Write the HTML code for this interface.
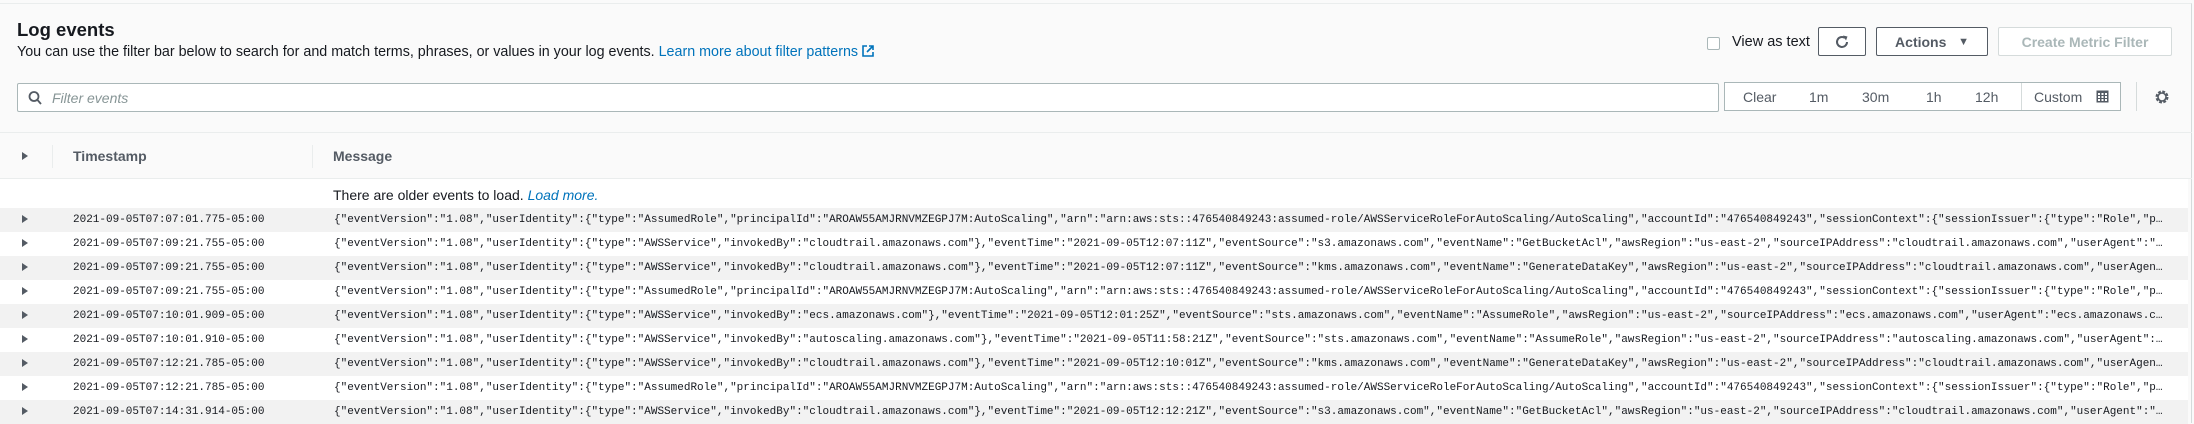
<!DOCTYPE html>
<html><head><meta charset="utf-8"><style>
*{box-sizing:border-box;margin:0;padding:0}
body{width:2194px;height:413px;overflow:hidden;background:#fafafa;font-family:"Liberation Sans",sans-serif;color:#16191f;position:relative}
.abs{position:absolute}
.panel{position:absolute;left:0;top:3px;width:2192px;height:420px;border-top:1px solid #eaeded;border-right:1px solid #d5dbdb;background:#fafafa}
.btn{position:absolute;border:1px solid #545b64;border-radius:2px;background:#fff;font-weight:bold;font-size:14px;color:#545b64;display:flex;align-items:center;justify-content:center}
.row{position:absolute;left:0;width:2188px;height:24px;font-family:"Liberation Mono",monospace;font-size:11px;color:#16191f;line-height:24px;white-space:nowrap}
.row .c{position:absolute;left:22px;top:7px;width:0;height:0;border-left:6px solid #545b64;border-top:4px solid transparent;border-bottom:4px solid transparent}
.row .t{position:absolute;left:73px}
.row .m{position:absolute;left:334px;width:1834px;overflow:hidden;text-overflow:ellipsis}
.g{background:#f2f2f2}.w{background:#fff}
.tb{position:absolute;top:0;height:100%;display:flex;align-items:center;font-size:14px;color:#545b64}
</style></head><body>
<div class="panel"></div>
<div class="abs" style="left:17px;top:19px;font-size:18.5px;font-weight:bold">Log events</div>
<div class="abs" style="left:17px;top:44px;font-size:14.3px;color:#16191f">You can use the filter bar below to search for and match terms, phrases, or values in your log events. <span style="color:#0073bb">Learn more about filter patterns</span> <svg width="12" height="12" viewBox="0 0 12 12" style="vertical-align:-1px"><path d="M5 1H1v10h10V7M7 1h4v4M11 1L5 7" stroke="#0073bb" stroke-width="1.6" fill="none"/></svg></div>

<div class="abs" style="left:1707px;top:37px;width:13px;height:13px;border:1px solid #aab7b8;border-radius:2px;background:#fff"></div>
<div class="abs" style="left:1732px;top:34px;font-size:14.5px;color:#16191f">View as text</div>
<div class="btn" style="left:1818px;top:27px;width:48px;height:29px"><svg width="16" height="16" viewBox="0 0 16 16"><path d="M13 8A5 5 0 1 1 11 4" stroke="#545b64" stroke-width="2" fill="none"/><path d="M9 1.5L13.5 2.5 12 6.5Z" fill="#545b64"/></svg></div>
<div class="btn" style="left:1876px;top:27px;width:112px;height:29px">Actions&nbsp;&nbsp;&nbsp;<span style="font-size:11px">▼</span></div>
<div class="btn" style="left:1998px;top:27px;width:174px;height:29px;border-color:#d5dbdb;color:#aab7b8">Create Metric Filter</div>

<div class="abs" style="left:17px;top:83px;width:1702px;height:29px;border:1px solid #aab7b8;border-radius:2px;background:#fff">
<svg class="abs" style="left:10px;top:6px" width="15" height="16" viewBox="0 0 15 16"><circle cx="6" cy="6.5" r="4.5" stroke="#545b64" stroke-width="1.8" fill="none"/><path d="M9.5 10l3.5 4" stroke="#545b64" stroke-width="1.8"/></svg>
<div class="abs" style="left:34px;top:6px;font-size:14px;font-style:italic;color:#879596">Filter events</div>
</div>
<div class="abs" style="left:1724px;top:82px;width:397px;height:29px;border:1px solid #aab7b8;background:#fff">
<div class="tb" style="left:18px">Clear</div>
<div class="tb" style="left:84px">1m</div>
<div class="tb" style="left:137px">30m</div>
<div class="tb" style="left:201px">1h</div>
<div class="tb" style="left:250px">12h</div>
<div class="abs" style="left:296px;top:0;width:1px;height:27px;background:#d5dbdb"></div>
<div class="tb" style="left:309px">Custom</div>
<svg class="abs" style="left:371px;top:7px" width="13" height="13" viewBox="0 0 13 13"><rect x="0.5" y="0.5" width="12" height="12" fill="#545b64"/><g fill="#fff"><rect x="2" y="3" width="2" height="2"/><rect x="5.5" y="3" width="2" height="2"/><rect x="9" y="3" width="2" height="2"/><rect x="2" y="6" width="2" height="2"/><rect x="5.5" y="6" width="2" height="2"/><rect x="9" y="6" width="2" height="2"/><rect x="2" y="9" width="2" height="2"/><rect x="5.5" y="9" width="2" height="2"/><rect x="9" y="9" width="2" height="2"/></g></svg>
</div>
<div class="abs" style="left:2136px;top:82px;width:1px;height:29px;background:#d5dbdb"></div>
<svg class="abs" style="left:2154px;top:89px" width="16" height="16" viewBox="0 0 16 16"><circle cx="8" cy="8" r="5.2" stroke="#545b64" stroke-width="2.6" fill="none" stroke-dasharray="2.7 1.4"/><circle cx="8" cy="8" r="4" stroke="#545b64" stroke-width="1.6" fill="none"/></svg>

<div class="abs" style="left:0;top:132px;width:2192px;height:1px;background:#eaeded"></div>
<div class="abs" style="left:0;top:178px;width:2192px;height:1px;background:#eaeded"></div>
<div class="abs" style="left:22px;top:152px;width:0;height:0;border-left:6px solid #545b64;border-top:4px solid transparent;border-bottom:4px solid transparent"></div>
<div class="abs" style="left:52px;top:145px;width:1px;height:23px;background:#eaeded"></div>
<div class="abs" style="left:73px;top:148px;font-size:14px;font-weight:bold;color:#545b64">Timestamp</div>
<div class="abs" style="left:312px;top:145px;width:1px;height:23px;background:#eaeded"></div>
<div class="abs" style="left:333px;top:148px;font-size:14px;font-weight:bold;color:#545b64">Message</div>
<div class="abs w" style="left:0;top:179px;width:2188px;height:29px"></div>
<div class="abs" style="left:333px;top:187px;font-size:14px;color:#16191f">There are older events to load. <i style="color:#0073bb">Load more.</i></div>

<div class="row g" style="top:208px"><div class="c"></div><span class="t">2021-09-05T07:07:01.775-05:00</span><span class="m">{"eventVersion":"1.08","userIdentity":{"type":"AssumedRole","principalId":"AROAW55AMJRNVMZEGPJ7M:AutoScaling","arn":"arn:aws:sts::476540849243:assumed-role/AWSServiceRoleForAutoScaling/AutoScaling","accountId":"476540849243","sessionContext":{"sessionIssuer":{"type":"Role","principalId":"AROAW55AMJRNVMZEGPJ7M"}}}}</span></div>
<div class="row w" style="top:232px"><div class="c"></div><span class="t">2021-09-05T07:09:21.755-05:00</span><span class="m">{"eventVersion":"1.08","userIdentity":{"type":"AWSService","invokedBy":"cloudtrail.amazonaws.com"},"eventTime":"2021-09-05T12:07:11Z","eventSource":"s3.amazonaws.com","eventName":"GetBucketAcl","awsRegion":"us-east-2","sourceIPAddress":"cloudtrail.amazonaws.com","userAgent":"cloudtrail.amazonaws.com"}</span></div>
<div class="row g" style="top:256px"><div class="c"></div><span class="t">2021-09-05T07:09:21.755-05:00</span><span class="m">{"eventVersion":"1.08","userIdentity":{"type":"AWSService","invokedBy":"cloudtrail.amazonaws.com"},"eventTime":"2021-09-05T12:07:11Z","eventSource":"kms.amazonaws.com","eventName":"GenerateDataKey","awsRegion":"us-east-2","sourceIPAddress":"cloudtrail.amazonaws.com","userAgent":"cloudtrail.amazonaws.com"}</span></div>
<div class="row w" style="top:280px"><div class="c"></div><span class="t">2021-09-05T07:09:21.755-05:00</span><span class="m">{"eventVersion":"1.08","userIdentity":{"type":"AssumedRole","principalId":"AROAW55AMJRNVMZEGPJ7M:AutoScaling","arn":"arn:aws:sts::476540849243:assumed-role/AWSServiceRoleForAutoScaling/AutoScaling","accountId":"476540849243","sessionContext":{"sessionIssuer":{"type":"Role","principalId":"AROAW55AMJRNVMZEGPJ7M"}}}}</span></div>
<div class="row g" style="top:304px"><div class="c"></div><span class="t">2021-09-05T07:10:01.909-05:00</span><span class="m">{"eventVersion":"1.08","userIdentity":{"type":"AWSService","invokedBy":"ecs.amazonaws.com"},"eventTime":"2021-09-05T12:01:25Z","eventSource":"sts.amazonaws.com","eventName":"AssumeRole","awsRegion":"us-east-2","sourceIPAddress":"ecs.amazonaws.com","userAgent":"ecs.amazonaws.com","requestParameters":{}}</span></div>
<div class="row w" style="top:328px"><div class="c"></div><span class="t">2021-09-05T07:10:01.910-05:00</span><span class="m">{"eventVersion":"1.08","userIdentity":{"type":"AWSService","invokedBy":"autoscaling.amazonaws.com"},"eventTime":"2021-09-05T11:58:21Z","eventSource":"sts.amazonaws.com","eventName":"AssumeRole","awsRegion":"us-east-2","sourceIPAddress":"autoscaling.amazonaws.com","userAgent":"autoscaling.amazonaws.com"}</span></div>
<div class="row g" style="top:352px"><div class="c"></div><span class="t">2021-09-05T07:12:21.785-05:00</span><span class="m">{"eventVersion":"1.08","userIdentity":{"type":"AWSService","invokedBy":"cloudtrail.amazonaws.com"},"eventTime":"2021-09-05T12:10:01Z","eventSource":"kms.amazonaws.com","eventName":"GenerateDataKey","awsRegion":"us-east-2","sourceIPAddress":"cloudtrail.amazonaws.com","userAgent":"cloudtrail.amazonaws.com"}</span></div>
<div class="row w" style="top:376px"><div class="c"></div><span class="t">2021-09-05T07:12:21.785-05:00</span><span class="m">{"eventVersion":"1.08","userIdentity":{"type":"AssumedRole","principalId":"AROAW55AMJRNVMZEGPJ7M:AutoScaling","arn":"arn:aws:sts::476540849243:assumed-role/AWSServiceRoleForAutoScaling/AutoScaling","accountId":"476540849243","sessionContext":{"sessionIssuer":{"type":"Role","principalId":"AROAW55AMJRNVMZEGPJ7M"}}}}</span></div>
<div class="row g" style="top:400px"><div class="c"></div><span class="t">2021-09-05T07:14:31.914-05:00</span><span class="m">{"eventVersion":"1.08","userIdentity":{"type":"AWSService","invokedBy":"cloudtrail.amazonaws.com"},"eventTime":"2021-09-05T12:12:21Z","eventSource":"s3.amazonaws.com","eventName":"GetBucketAcl","awsRegion":"us-east-2","sourceIPAddress":"cloudtrail.amazonaws.com","userAgent":"cloudtrail.amazonaws.com"}</span></div>
</body></html>
